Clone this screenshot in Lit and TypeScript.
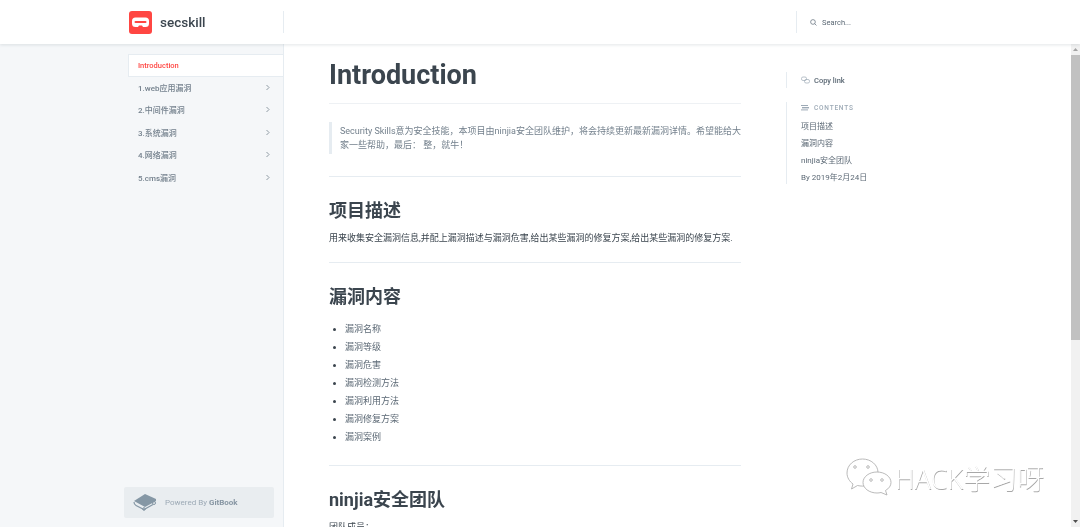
import { LitElement, html, css } from 'lit';
import { customElement } from 'lit/decorators.js';

const NAV = ['1.web应用漏洞', '2.中间件漏洞', '3.系统漏洞', '4.网络漏洞', '5.cms漏洞'];
const TOC = ['项目描述', '漏洞内容', 'ninjia安全团队', 'By 2019年2月24日'];
const VULNS = ['漏洞名称', '漏洞等级', '漏洞危害', '漏洞检测方法', '漏洞利用方法', '漏洞修复方案', '漏洞案例'];

@customElement('app-root')
export class AppRoot extends LitElement {
  static styles = css`
    :host {
      display: flex;
      flex-direction: column;
      position: relative;
      width: 1080px;
      height: 527px;
      overflow: hidden;
      background: #fff;
      color: #3b454e;
      font-family: Roboto, 'Noto Sans CJK SC', sans-serif;
      /* the reference is a scaled-down capture, its text is soft and greyscale */
      filter: blur(0.3px);
    }
    header {
      flex: none;
      height: 44px;
      display: flex;
      align-items: center;
      background: #fff;
      box-shadow: 0 1px 3px rgba(116, 129, 141, 0.2);
      position: relative;
      z-index: 2;
    }
    .brand {
      width: 155px;
      height: 22px;
      margin-left: 128px;
      display: flex;
      align-items: center;
      gap: 8px;
      border-right: 1px solid #e6ecf1;
    }
    .brand span {
      font-size: 13.5px;
      font-weight: 500;
      color: #3b454e;
    }
    .logo {
      width: 23px;
      height: 23px;
      flex: none;
      margin-left: 1px;
    }
    .search {
      margin-left: 512px;
      height: 22px;
      padding-left: 13px;
      display: flex;
      align-items: center;
      gap: 5px;
      border-left: 1px solid #e6ecf1;
      font-size: 7.5px;
      color: #5c6975;
    }
    .body {
      flex: 1;
      display: flex;
      min-height: 0;
    }
    .side {
      flex: none;
      width: 155px;
      padding: 10px 0 0 128px;
      background: #f5f7f9;
      border-right: 1px solid #e6ecf1;
      display: flex;
      flex-direction: column;
    }
    .nav {
      height: 22.5px;
      display: flex;
      align-items: center;
      justify-content: space-between;
      padding: 0 12px 1px 10px;
      font-size: 8px;
      font-weight: 500;
      color: #74818d;
      box-sizing: border-box;
    }
    .nav.active {
      background: #fff;
      color: #ff4642;
      border: 1px solid #e6ecf1;
      border-right: 0;
      padding: 0 0 0 9px;
      font-size: 7.5px;
    }
    .powered {
      margin: auto 9px 9.5px -4px;
      height: 31px;
      display: flex;
      align-items: center;
      gap: 8px;
      padding-left: 9px;
      background: #e9edf0;
      border-radius: 2px;
      font-size: 8px;
      color: #9daab6;
    }
    .powered b {
      font-weight: 700;
      color: #8796a3;
    }
    .scroll {
      flex: 1;
      display: flex;
      min-width: 0;
    }
    main {
      flex: none;
      width: 412px;
      margin-left: 45px;
      font-size: 9px;
      color: #3b454e;
    }
    h1 {
      margin: 0;
      height: 60px;
      box-sizing: border-box;
      padding-top: 13px;
      font-size: 27px;
      line-height: 36px;
      font-weight: 700;
      border-bottom: 1px solid #eef1f4;
    }
    blockquote {
      margin: 18px 0 22px;
      padding: 2px 0 1.5px 8px;
      border-left: 3px solid #e6ecf1;
      color: #74818d;
      line-height: 14px;
      font-size: 9px;
    }
    hr {
      margin: 0;
      border: 0;
      border-top: 1px solid #e6ecf1;
    }
    h2 {
      margin: 0;
      font-size: 18px;
      line-height: 24px;
      font-weight: 700;
    }
    .s1 {
      margin-top: 22px;
    }
    .s2 {
      margin-top: 22px;
    }
    .r1 {
      margin-top: 17px;
    }
    .r2 {
      margin-top: 19px;
    }
    p {
      margin: 8px 0 0;
      line-height: 14px;
      font-size: 9px;
    }
    ul {
      margin: 11px 0 0;
      padding: 0 0 0 16px;
    }
    li {
      line-height: 18px;
      color: #5c6975;
    }
    li::marker {
      color: #3b454e;
    }
    .toc {
      flex: none;
      margin: 28px 0 0 45px;
      font-size: 8px;
      color: #5c6975;
    }
    .copy {
      height: 16px;
      padding-left: 14px;
      display: flex;
      align-items: center;
      gap: 4px;
      border-left: 1px solid #e6ecf1;
      font-size: 7.5px;
      font-weight: 500;
    }
    .contents {
      margin-top: 14px;
      padding: 0 0 0 14px;
      border-left: 1px solid #e6ecf1;
      height: 82px;
    }
    .contents h4 {
      margin: 0 0 5px;
      height: 11px;
      display: flex;
      align-items: center;
      gap: 5px;
      font-size: 6.5px;
      font-weight: 500;
      letter-spacing: 0.8px;
      color: #9daab6;
    }
    .contents div {
      height: 17px;
      line-height: 17px;
    }
    .bar {
      flex: none;
      width: 9px;
      background: #f1f1f1;
      display: flex;
      flex-direction: column;
      align-items: center;
      margin-left: auto;
    }
    .arrow {
      flex: none;
      height: 11px;
      display: flex;
      align-items: center;
      justify-content: center;
    }
    .thumb {
      flex: none;
      width: 100%;
      height: 285px;
      background: #c1c1c1;
    }
    .spacer {
      flex: 1;
    }
    .mark {
      position: absolute;
      left: 846px;
      top: 458px;
      display: flex;
      align-items: flex-start;
      gap: 3px;
      font-size: 27px;
      font-weight: 300;
      color: #fff;
      text-shadow: 0.5px 0.5px 0.6px #a8a8a8;
      line-height: 38px;
      font-family: 'Noto Sans', 'Noto Sans CJK SC', sans-serif;
    }
    .mark span {
      margin-top: 2px;
    }
  `;

  private chevron() {
    return html`<svg width="7" height="7" viewBox="0 0 7 7" fill="none" stroke="#74818d" stroke-width=".8"><path d="M2.500 1l2.500 2.500L2.500 6" /></svg>`;
  }

  render() {
    return html`
      <header>
        <div class="brand">
          <svg class="logo" viewBox="0 0 23 23">
            <rect width="23" height="23" rx="3" fill="#ff4642" />
            <path d="M6.500 6.500h10a3.500 3.500 0 0 1 3.500 3.500v2.500a3.500 3.500 0 0 1-3.500 3.500h-2.500l-1-1.500h-3l-1 1.500H6.500A3.500 3.500 0 0 1 3 12.500V10a3.500 3.500 0 0 1 3.500-3.500z" fill="#fff" />
            <rect x="5.500" y="10" width="12" height="2" rx="1" fill="#ff4642" />
          </svg>
          <span>secskill</span>
        </div>
        <div class="search">
          <svg width="7" height="7" viewBox="0 0 8 8" fill="none" stroke="#5c6975" stroke-width=".8"><circle cx="3.400" cy="3.400" r="2.700" /><path d="M5.400 5.400l2 2" /></svg>
          Search...
        </div>
      </header>
      <div class="body">
        <nav class="side">
          <div class="nav active">Introduction</div>
          ${NAV.map((n) => html`<div class="nav">${n}${this.chevron()}</div>`)}
          <div class="powered">
            <svg width="24" height="18" viewBox="0 0 24 18">
              <path d="M1 8l11-7 11 5v2L12 14z" fill="#8597a5" />
              <path d="M1 9c0 2 1 3 2 3.500L11 16.500l9-5" fill="none" stroke="#8597a5" stroke-width="1.200" />
              <circle cx="21" cy="10" r="1.500" fill="none" stroke="#8597a5" />
              <circle cx="11" cy="16" r="1.300" fill="none" stroke="#8597a5" />
            </svg>
            <span>Powered By <b>GitBook</b></span>
          </div>
        </nav>
        <div class="scroll">
          <main>
            <h1>Introduction</h1>
            <blockquote>Security Skills意为安全技能，本项目由ninjia安全团队维护，将会持续更新最新漏洞详情。希望能给大家一些帮助，最后： 整，就牛！</blockquote>
            <hr />
            <h2 class="s1">项目描述</h2>
            <p>用来收集安全漏洞信息,并配上漏洞描述与漏洞危害,给出某些漏洞的修复方案,给出某些漏洞的修复方案.</p>
            <hr class="r1" />
            <h2 class="s2">漏洞内容</h2>
            <ul>${VULNS.map((v) => html`<li>${v}</li>`)}</ul>
            <hr class="r2" />
            <h2 class="s2">ninjia安全团队</h2>
            <p>团队成员：</p>
          </main>
          <aside class="toc">
            <div class="copy">
              <svg width="9" height="8" viewBox="0 0 9 8" fill="none" stroke="#9daab6" stroke-width=".7"><rect x=".5" y="1" width="5" height="3.500" rx="1.500" /><rect x="3.500" y="3.500" width="5" height="3.500" rx="1.500" /></svg>
              Copy link
            </div>
            <div class="contents">
              <h4>
                <svg width="8" height="6" viewBox="0 0 8 6" fill="#9daab6"><rect width="7" height="1" x="0" y="0" /><rect width="7" height="1.400" x="1" y="2" /><rect width="7" height="1" x="0" y="4.400" /></svg>
                CONTENTS
              </h4>
              ${TOC.map((t) => html`<div>${t}</div>`)}
            </div>
          </aside>
          <div class="bar">
            <div class="arrow"><svg width="5" height="3" viewBox="0 0 5 3"><path d="M0 3l2.500-3L5 3z" fill="#a3a3a3" /></svg></div>
            <div class="thumb"></div>
            <div class="spacer"></div>
            <div class="arrow"><svg width="5" height="3" viewBox="0 0 5 3"><path d="M0 0l2.500 3L5 0z" fill="#505050" /></svg></div>
          </div>
        </div>
      </div>
      <div class="mark">
        <svg width="46" height="38" viewBox="0 0 46 38" fill="#fff" stroke="#a8a8a8" stroke-width=".8">
          <path d="M16.500 1C8 1 1 7 1 15c0 4.500 2.500 8.500 6 11l-1.500 5 6-3.500c1.500.4 3.500.6 5 .6C25 28 32 22 32 14.500S25 1 16.500 1z" />
          <path d="M31 14c-7.700 0-14 4.700-14 10.500S23.300 35 31 35c1.300 0 2.700-.2 4-.5l6 2.500-1.500-4.500c3.500-2 5.500-4.800 5.500-8C45 18.700 38.700 14 31 14z" />
          <circle cx="9" cy="9" r="1.300" /><circle cx="22" cy="9" r="1.300" /><circle cx="25" cy="22" r="1.300" /><circle cx="36" cy="22" r="1.300" />
        </svg>
        <span>HACK学习呀</span>
      </div>
    `;
  }
}
